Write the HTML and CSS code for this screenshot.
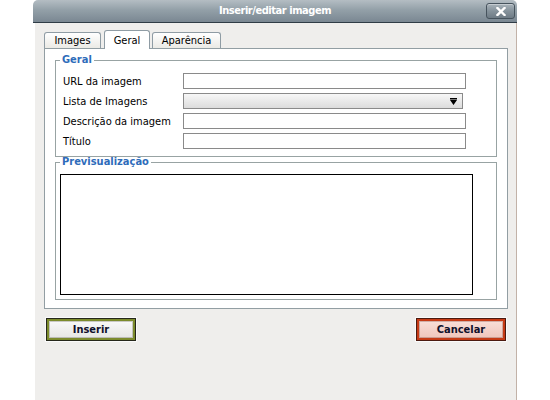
FILE: index.html
```html
<!DOCTYPE html>
<html lang="pt">
<head>
<meta charset="utf-8">
<title>Inserir/editar imagem</title>
<link rel="stylesheet" href="styles.css">
</head>
<body>
<div class="dialog">
  <div class="titlebar">
    <span class="spacer"></span>
    <span class="title">Inserir/editar imagem</span>
    <span class="close" title="Fechar">
      <svg width="10" height="9" viewBox="0 0 10 9"><path d="M1.5 1 L8.5 8 M8.5 1 L1.5 8" stroke="#fff" stroke-width="2.4" stroke-linecap="square"/></svg>
    </span>
  </div>
  <div class="body">
    <div class="tabs">
      <span class="tab tab-images">Images</span>
      <span class="tab tab-geral active">Geral</span>
      <span class="tab tab-apar">Aparência</span>
    </div>
    <div class="panel">
      <fieldset class="fs fs-geral">
        <legend>Geral</legend>
        <div class="row"><label class="lbl">URL da imagem</label><input class="field" type="text"></div>
        <div class="row"><label class="lbl">Lista de Imagens</label>
          <div class="select"><svg width="7" height="7" viewBox="0 0 7 7"><path d="M0 0 H7 V1.5 H0 Z M0 2 H7 L3.5 7 Z" fill="#000"/></svg></div>
        </div>
        <div class="row"><label class="lbl">Descrição da imagem</label><input class="field" type="text"></div>
        <div class="row"><label class="lbl">Título</label><input class="field" type="text"></div>
      </fieldset>
      <fieldset class="fs fs-prev">
        <legend>Previsualização</legend>
        <div class="preview"></div>
      </fieldset>
    </div>
    <div class="buttons">
      <button class="btn btn-ok" type="button">Inserir</button>
      <button class="btn btn-cancel" type="button">Cancelar</button>
    </div>
  </div>
</div>
</body>
</html>
```
FILE: styles.css
```css
html, body {
  margin: 0;
  padding: 0;
  background: #ffffff;
}
body {
  font-family: "DejaVu Sans Condensed", "Liberation Sans", sans-serif;
  font-size: 11px;
  color: #000;
}
.dialog {
  width: 484px;
  height: 400px;
  margin-left: 33px;
  display: flex;
  flex-direction: column;
}
.titlebar {
  flex: none;
  height: 23px;
  box-sizing: border-box;
  border-bottom: 1px solid #2f3c46;
  border-radius: 5px 5px 0 0;
  background: linear-gradient(#b4bdc3, #93a0a8 45%, #7a8792);
  display: grid;
  grid-template-columns: 1fr auto 1fr;
  align-items: start;
}
.title {
  color: #fff;
  font-weight: bold;
  font-size: 11px;
  letter-spacing: -0.45px;
  line-height: 22px;
  white-space: nowrap;
}
.close {
  justify-self: end;
  margin: 3px 2px 0 0;
  width: 29px;
  height: 16px;
  box-sizing: border-box;
  border: 1px solid #46535d;
  border-radius: 3px;
  background: linear-gradient(#a9b3ba, #85929b 50%, #6e7b85);
  box-shadow: inset 0 1px 0 rgba(255,255,255,0.35);
  display: flex;
  align-items: center;
  justify-content: center;
}
.body {
  flex: 1;
  margin-left: 2px;
  background: #efeeec;
  border-right: 1px solid #c2b2a8;
  padding: 7px 8px 0 9px;
}
.tabs {
  display: flex;
  align-items: flex-end;
  gap: 3px;
  height: 18px;
}
.tab {
  box-sizing: border-box;
  height: 16px;
  border: 1px solid #8f9ca4;
  border-bottom: 0;
  border-radius: 3px 3px 0 0;
  background: linear-gradient(#ffffff, #ebeae5);
  text-align: center;
  line-height: 15px;
  font-size: 11px;
  white-space: nowrap;
}
.tab-images { width: 57px; }
.tab-geral { width: 46px; }
.tab-apar { width: 69px; margin-left: -1px; }
.tab.active {
  height: 19px;
  padding-top: 2px;
  background: #fff;
  margin-bottom: -1px;
  position: relative;
  z-index: 1;
}
.panel {
  box-sizing: border-box;
  height: 261px;
  border: 1px solid #929ea3;
  background: #fff;
  padding: 5px 10px 8px;
}
.fs {
  margin: 0;
  min-width: 0;
  border: 1px solid #98a3a3;
}
.fs legend {
  font-weight: bold;
  color: #2e6cba;
  font-size: 11px;
  line-height: 12px;
  padding: 0 2px;
}
.fs-geral {
  padding: 5px 7px 5px 7px;
}
.fs-geral legend {
  margin-left: -3px;
}
.fs-prev {
  margin-top: -1px;
  padding: 6px 4px 4px 4px;
}
.row {
  display: grid;
  grid-template-columns: 120px auto;
  align-items: center;
  height: 20px;
}
.lbl {
  white-space: nowrap;
}
.field {
  display: block;
  width: 283px;
  height: 16px;
  box-sizing: border-box;
  margin: 0;
  padding: 0 2px;
  border: 1px solid #8a8a8a;
  background: #fff;
  font: inherit;
  outline: none;
}
.select {
  width: 280px;
  height: 16px;
  box-sizing: border-box;
  border: 1px solid #8a8a8a;
  background: linear-gradient(#f7f7f7, #dcdcdc);
  display: flex;
  justify-content: flex-end;
  align-items: center;
  padding-right: 5px;
}
.preview {
  width: 413px;
  height: 121px;
  box-sizing: border-box;
  border: 1px solid #000;
  background: #fff;
}
.buttons {
  display: flex;
  justify-content: space-between;
  padding: 9px 2px 0;
}
.btn {
  width: 90px;
  height: 23px;
  box-sizing: border-box;
  margin: 0;
  padding: 0;
  font-family: inherit;
  font-size: 11px;
  font-weight: bold;
  color: #10102a;
  cursor: pointer;
}
.btn-ok {
  border: 1px solid #25271a;
  background: linear-gradient(#fbfbfb, #e4e4e1);
  box-shadow: inset 0 0 0 2px #7c8b2c, inset 0 0 0 3px rgba(60,60,40,0.25), 0 0 0 1px #fafafa;
}
.btn-cancel {
  border: 1px solid #4b1a10;
  background: linear-gradient(#f9e1db, #efc3b8);
  box-shadow: inset 0 0 0 2px #c63a15, inset 0 0 0 3px rgba(90,30,20,0.25), 0 0 0 1px #fafafa;
}
```
